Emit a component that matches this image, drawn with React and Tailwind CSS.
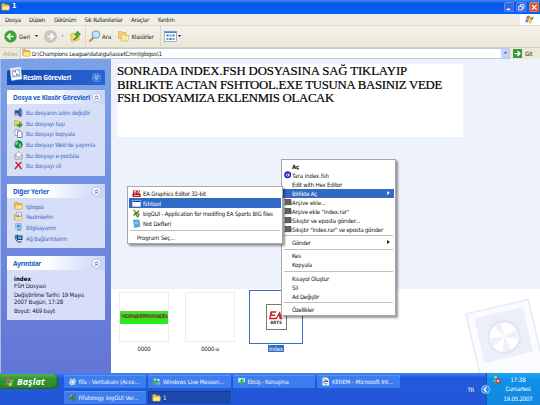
import React, { useLayoutEffect, useRef, useState } from "react";

// Text that is tracked so that it spans a given width.
function Fit({ w, className = "", children }) {
  const ref = useRef(null);
  const [ls, setLs] = useState(0);
  useLayoutEffect(() => {
    const natural = ref.current.getBoundingClientRect().width;
    setLs((w - natural) / ref.current.textContent.length);
  }, []);
  return (
    <span ref={ref} className={"inline-block shrink-0 whitespace-pre " + className} style={{ letterSpacing: ls + "px" }}>
      {children}
    </span>
  );
}

function Folder({ className = "h-[8px] w-[9px]" }) {
  return (
    <svg viewBox="0 0 18 16" className={"shrink-0 " + className}>
      <path d="M1 3l1-2h5l2 2h6l1 2v9H2L1 12z" fill="#e9b93c" stroke="#b98a26" />
      <path d="M3 6h14l-1 8H2z" fill="#ffe994" stroke="#d9ab3d" />
    </svg>
  );
}

function Chevrons({ dark }) {
  return (
    <svg viewBox="0 0 20 20" className="h-[9px] w-[9px] shrink-0">
      <circle cx="10" cy="10" r="9" fill={dark ? "#3d72d8" : "#fff"} stroke={dark ? "#86aaf0" : "#a9b4d4"} strokeWidth="1.5" />
      <path d={dark ? "M6 5l4 4 4-4M6 10l4 4 4-4" : "M6 10l4-4 4 4M6 15l4-4 4 4"} fill="none" stroke={dark ? "#fff" : "#39467c"} strokeWidth="2" />
    </svg>
  );
}

const svg9 = "h-[9px] w-[9px] shrink-0";
const icons = {
  rename: <svg viewBox="0 0 18 18" className={svg9}><path d="M1 4h16v11H1z" fill="#7a91cd" /><path d="M2 5h8v9H2z" fill="#334d98" /><path d="M12 2v14M10 2h5M10 16h5" stroke="#233973" strokeWidth="2" /><path d="M3 12h5" stroke="#fff" strokeWidth="2" /></svg>,
  move: <svg viewBox="0 0 18 18" className={svg9}><path d="M1 3h6l2 2h6v9H1z" fill="#ead35d" stroke="#a79b3a" /><path d="M6 11h5V7l6 5-6 5v-3H6z" fill="#34a832" stroke="#177e22" /></svg>,
  copy: <svg viewBox="0 0 18 18" className={svg9}><path d="M2 1h8v12H2z" fill="#fff" stroke="#626f91" /><path d="M7 4h6l3 3v10H7z" fill="#fff" stroke="#526287" strokeWidth="1.5" /></svg>,
  web: <svg viewBox="0 0 18 18" className={svg9}><circle cx="9" cy="9" r="8" fill="#168f46" /><path d="M4 3l5 1-1 4-4 2-2-3zM10 8l5-1-1 6-4 3z" fill="#77d85d" /><path d="M8 1c4 2 7 5 8 9" stroke="#1b609f" strokeWidth="2" fill="none" /></svg>,
  mail: <svg viewBox="0 0 18 18" className={svg9}><path d="M2 7l7-6 7 6v9H2z" fill="#efdc95" stroke="#947f54" /><path d="M5 3h9v8H5z" fill="#fff" stroke="#adadb8" /><path d="M2 8l7 5 7-5v8H2z" fill="#dce3f5" stroke="#7e83a0" /></svg>,
  del: <svg viewBox="0 0 18 18" className={svg9}><path d="M3 2c4 3 8 8 12 14M15 2C10 6 6 10 2 16" stroke="#cb1920" strokeWidth="2.8" fill="none" /></svg>,
  folder: <Folder />,
  pics: <svg viewBox="0 0 18 18" className={svg9}><path d="M1 5h15v11H1z" fill="#edc45c" stroke="#ae8531" /><path d="M5 1h10v10H5z" fill="#e5e8f6" stroke="#8a8ca2" /><path d="M6 8l3-3 5 5H6z" fill="#7794c4" /><path d="M2 10h14v6H2z" fill="#f8db80" /></svg>,
  pc: <svg viewBox="0 0 18 18" className={svg9}><path d="M3 1h12v10H3z" fill="#d6e4f5" stroke="#718bac" /><path d="M5 3h8v6H5z" fill="#3b97de" /><path d="M7 11h6l2 5H5z" fill="#8caac6" /></svg>,
  net: <svg viewBox="0 0 18 18" className={svg9}><circle cx="6" cy="6" r="5" fill="#2a9a8d" /><path d="M6 3h11v9H6z" fill="#1b3e83" /><path d="M8 5h7v5H8z" fill="#57b3ee" /><path d="M3 11l5 5h7" stroke="#26436e" strokeWidth="2" fill="none" /></svg>,
  ea: <svg viewBox="0 0 18 18" className={svg9}><path d="M2 3h14v8H2z" fill="#d51927" /><path d="M1 9h16v7H1z" fill="#a41b28" /><path d="M4 5h4M4 8h4M11 9l2-5 2 5" stroke="#fff" strokeWidth="1.5" fill="none" /><path d="M4 13h10" stroke="#eec7c7" strokeWidth="2" /></svg>,
  exe: <svg viewBox="0 0 18 18" className={svg9}><path d="M1 3h16v12H1z" fill="#fff" /><path d="M1 3h16v3H1z" fill="#12379a" /><path d="M1 3h16v12H1z" fill="none" stroke="#c6d5f1" /></svg>,
  big: <svg viewBox="0 0 18 18" className={svg9}><path d="M3 2l5 5-3 4M14 3l-4 5 4 3-3 6M3 13l5-3 2 5" stroke="#4e7c21" strokeWidth="2.6" fill="none" /><circle cx="6" cy="5" r="2" fill="#b6b73a" /></svg>,
  note: <svg viewBox="0 0 18 18" className={svg9}><path d="M3 2h11l2 13-11 2z" fill="#51b0df" stroke="#347fae" /><path d="M5 6h8M5 9h8" stroke="#bceafa" /></svg>,
  rar: <svg viewBox="0 0 18 18" className="h-[8px] w-[8px] shrink-0"><path d="M1 2h14l2 3H3z" fill="#8b476c" /><path d="M1 3h15v4H1z" fill="#a23349" /><path d="M2 7h15v4H2z" fill="#354c8d" /><path d="M1 11h16v5H1z" fill="#317045" /><path d="M9 2v14" stroke="#7d6a4a" strokeWidth="3" /><path d="M3 5h3M3 13h3" stroke="#e6cfd4" /></svg>,
  tara: <svg viewBox="0 0 18 18" className="h-[7.500px] w-[7.500px] shrink-0"><circle cx="9" cy="9" r="8.500" fill="#1b27c5" /><circle cx="8.500" cy="9.500" r="3" fill="none" stroke="#fff" strokeWidth="1.800" /><path d="M12 6v7" stroke="#fff" strokeWidth="1.800" /></svg>,
  doc: <svg viewBox="0 0 18 18" className={svg9}><path d="M2 12l3-9 5 2 2-3 4 5-2 8-8 2z" fill="#c9d4ef" /><path d="M7 7l6 1-2 6-5-1z" fill="#fff" stroke="#7b8bb5" /></svg>,
  msn: <svg viewBox="0 0 18 18" className={svg9}><circle cx="6" cy="5" r="3" fill="#8ce06c" /><path d="M1 15l2-6h6l2 6z" fill="#49b05e" /><circle cx="13" cy="6" r="2.6" fill="#b9eaff" /><path d="M9 15l2-5h4l2 5z" fill="#67b7ed" /></svg>,
  chat: <svg viewBox="0 0 18 18" className={svg9}><path d="M2 2h14v8l-5 1-4 5V11H3z" fill="#c6f4d0" /><path d="M7 5l7-1-3 10-5 2z" fill="#37b35a" /></svg>,
  ie: <svg viewBox="0 0 18 18" className={svg9}><path d="M3 1h9l4 4v12H3z" fill="#fff8df" /><path d="M13 12c-3 4-8 1-7-3s7-4 8 0H7" stroke="#2467c3" strokeWidth="2" fill="none" /><path d="M2 4h5" stroke="#d8ac40" strokeWidth="2" /></svg>,
};

function Flag({ className }) {
  return (
    <svg viewBox="0 0 20 18" className={"shrink-0 " + className}>
      <path d="M4 2q3-2 6 0l-2 6q-3-2-6 0z" fill="#ee5b2f" />
      <path d="M11 3q3 2 7 0l-2 6q-4 2-7 0z" fill="#74bc3d" />
      <path d="M2 9q3-2 6 0l-2 6q-3-2-6 0z" fill="#4c8ee8" />
      <path d="M9 10q3 2 6 0l-2 6q-3 2-6 0z" fill="#fbc635" />
    </svg>
  );
}

function Panel({ title, w, className, children }) {
  return (
    <section className={"w-[98px] bg-[#d6dff7] " + className}>
      <h2 className="flex h-[14px] items-center justify-between rounded-t-[2px] bg-linear-to-r from-white from-40% to-[#c7d4f7] pr-[4px] pl-[6px] font-['Noto_Sans'] text-[6.5px] font-bold text-[#215dc6]">
        <Fit w={w}>{title}</Fit>
        <Chevrons />
      </h2>
      {children}
    </section>
  );
}

function Links({ items }) {
  return items.map(([icon, text, w]) => (
    <div key={text} className="flex h-[10.6px] items-center gap-[3px] pl-[7px] text-[#3d69c5]">
      {icons[icon]}
      <Fit w={w}>{text}</Fit>
    </div>
  ));
}

function MenuRow({ icon, text, w, active, arrow, className = "h-[9px]", pad = "pl-[9px]" }) {
  return (
    <div className={"flex items-center " + className + (active ? " bg-[#316ac5] text-white" : "")}>
      <span className={"flex shrink-0 " + (pad === "pl-[9px]" ? "w-[9px] justify-start pl-[0.5px]" : "w-[14px] justify-end pr-[2px]")}>{icon && icons[icon]}</span>
      <Fit w={w}>{text}</Fit>
      {arrow && (
        <svg viewBox="0 0 4 6" className="mr-[4px] ml-auto h-[4px] w-[3px]"><path d="M0 0l4 3-4 3z" fill={active ? "#fff" : "#000"} /></svg>
      )}
    </div>
  );
}

const Sep = () => <div className="flex h-[4.4px] items-center px-[1px]"><div className="h-px w-full bg-[#c2bfb4]" /></div>;

function Task({ icon, text, w, active }) {
  return (
    <div className={"flex h-[13px] w-[82.5px] items-center gap-[2px] rounded-[1.5px] pl-[4px] text-[#f2f6ff] " + (active ? "bg-[#1b49ad] shadow-[inset_1px_1px_1px_#153b90]" : "bg-[#3c7df0] shadow-[inset_0_1px_0_#5c96f8]")}>
      {icons[icon]}
      <Fit w={w}>{text}</Fit>
    </div>
  );
}

const Caret = ({ c = "#222" }) => <svg viewBox="0 0 6 4" className="h-[2px] w-[3px] shrink-0"><path d="M0 0h6l-3 4z" fill={c} /></svg>;

export default function App() {
  return (
    <div className="relative flex h-[405px] w-[540px] flex-col overflow-hidden bg-white font-['DejaVu_Sans_Condensed','DejaVu_Sans','Noto_Sans',sans-serif] text-[6px] leading-[7px] text-[#222]">
      <header className="flex h-[13.5px] shrink-0 items-center bg-linear-to-b from-[#3f8cf3] via-[#0755e5] via-25% to-[#0262fb] pr-[1px] pl-[1px] text-white">
        <Folder />
        <span className="ml-[2px] text-[7px] font-bold">1</span>
        <div className="ml-auto flex gap-[2px]">
          <svg viewBox="0 0 20 20" className="h-[10.5px] w-[10.5px]"><rect x="1" y="1" width="18" height="18" rx="3" fill="#3565e2" stroke="#9bbcfb" /><path d="M5 14h7" stroke="#fff" strokeWidth="3" /></svg>
          <svg viewBox="0 0 20 20" className="h-[10.5px] w-[10.5px]"><rect x="1" y="1" width="18" height="18" rx="3" fill="#3565e2" stroke="#9bbcfb" /><path d="M8 8V5h7v7h-3M5 8.500h7V15H5z" stroke="#fff" strokeWidth="1.7" fill="none" /></svg>
          <svg viewBox="0 0 20 20" className="h-[10.5px] w-[10.5px]"><rect x="1" y="1" width="18" height="18" rx="3" fill="#e3532d" stroke="#f6c3b4" /><path d="M5.500 5.500l9 9M14.500 5.500l-9 9" stroke="#fff" strokeWidth="2.5" /></svg>
        </div>
      </header>

      <nav className="flex h-[12px] shrink-0 items-center border-b border-[#dedbcd] bg-[#efeee4] pl-[5px]">
        <Fit w={16} className="mr-[8px]">Dosya</Fit>
        <Fit w={16} className="mr-[9px]">Düzen</Fit>
        <Fit w={22} className="mr-[8.500px]">Görünüm</Fit>
        <Fit w={38} className="mr-[8.500px]">Sık Kullanılanlar</Fit>
        <Fit w={18} className="mr-[8.500px]">Araçlar</Fit>
        <Fit w={17}>Yardım</Fit>
        <div className="ml-auto flex h-full w-[20px] items-center justify-center bg-white"><Flag className="h-[9px] w-[10px]" /></div>
      </nav>

      <div className="flex h-[22px] shrink-0 items-center border-b border-[#d5d1c0] bg-linear-to-b from-[#f3f1e9] to-[#ebe8d8] pl-[4px]">
        <svg viewBox="0 0 26 26" className="h-[13px] w-[13px] shrink-0"><circle cx="13" cy="13" r="12" fill="#35a536" stroke="#75b36d" /><path d="M19 13H8M13 7l-6 6 6 6" stroke="#fff" strokeWidth="3" fill="none" /></svg>
        <Fit w={11} className="ml-[2px]">Geri</Fit>
        <span className="ml-[5px] flex"><Caret /></span>
        <svg viewBox="0 0 26 26" className="ml-[6px] h-[13px] w-[13px] shrink-0"><circle cx="13" cy="13" r="12" fill="#c9c9c4" stroke="#adaea8" /><path d="M7 13h11M13 7l6 6-6 6" stroke="#fff" strokeWidth="3" fill="none" /></svg>
        <span className="ml-[4px] flex"><Caret c="#b5b4ab" /></span>
        <svg viewBox="0 0 22 24" className="ml-[6px] h-[12px] w-[11px] shrink-0"><path d="M1 8l7-2 2 2 9-2-1 14-15 3z" fill="#f5dc74" stroke="#bd9833" /><path d="M7 18c5-1 6-5 6-8H9l6-8 6 7h-4c0 6-4 10-10 11z" fill="#42a83a" stroke="#26802a" /></svg>
        <div className="ml-[4px] h-[20px] w-px bg-[#d9d6c8]" />
        <svg viewBox="0 0 26 26" className="ml-[2px] h-[13px] w-[13px] shrink-0"><path d="M3 23l8-8" stroke="#b58b5b" strokeWidth="4" /><circle cx="16" cy="9" r="7.500" fill="#c8e6fb" stroke="#7795b8" strokeWidth="2" /></svg>
        <Fit w={9.5} className="ml-[1px]">Ara</Fit>
        <svg viewBox="0 0 24 24" className="ml-[6px] h-[12px] w-[12px] shrink-0"><path d="M1 3h6l2 2h7v12H1z" fill="#f3d472" stroke="#c49a40" /><path d="M6 9h6l2 2h8l-2 11H7z" fill="#ffe99b" stroke="#c9a148" /></svg>
        <Fit w={22} className="ml-[2px]">Klasörler</Fit>
        <div className="ml-[6px] h-[20px] w-px bg-[#d9d6c8]" />
        <svg viewBox="0 0 26 22" className="ml-[3px] h-[11px] w-[13px] shrink-0"><rect x="1" y="1" width="24" height="20" fill="#fff" stroke="#3b6fc4" /><path d="M1 1h24v3H1z" fill="#4c8ae2" /><path d="M5 7h4v4H5zM17 7h4v4h-4zM11 14h4v4h-4z" fill="#3a6ecb" /><path d="M11 7h4v4h-4zM5 14h4v4H5zM17 14h4v4h-4z" fill="#65a28f" /></svg>
        <span className="ml-[1px] flex"><Caret /></span>
      </div>

      <div className="flex h-[11.5px] shrink-0 items-center bg-[#ece9d8] pl-[3px]">
        <Fit w={15} className="mr-[2px] text-[#aaa799]">Adres</Fit>
        <div className="flex h-[11px] w-[490px] items-center border border-[#bdcbe0] bg-white pl-[1px]">
          <Folder />
          <Fit w={130} className="ml-[1px] text-[#111]">{"D:\\Champions League\\data\\gui\\assetCmn\\lglogos\\1"}</Fit>
          <span className="ml-auto flex h-[9px] w-[8px] items-center justify-center bg-[#c3d3fb]"><Caret c="#34568e" /></span>
        </div>
        <svg viewBox="0 0 18 18" className="ml-[3px] h-[9px] w-[9px] shrink-0"><rect width="18" height="18" rx="1" fill="#32993b" /><path d="M3 9h10M9 4l5 5-5 5" stroke="#fff" strokeWidth="2.500" fill="none" /></svg>
        <Fit w={7} className="ml-[3px]">Git</Fit>
      </div>

      <div className="flex h-[314px] shrink-0">
        <aside className="flex w-[111px] shrink-0 flex-col border-l border-[#a9bbea] bg-linear-to-b from-[#7ba2e7] to-[#6375d6] pt-[11px] pl-[6px]">
          <section className="flex h-[15px] w-[98px] shrink-0 items-center rounded-t-[2px] bg-linear-to-r from-[#1148ad] to-[#2a63d3] pr-[4px] pl-[2px] font-['Noto_Sans'] text-[6.500px] font-bold text-white">
            <svg viewBox="0 0 28 32" className="-mt-[7px] h-[16px] w-[14px] shrink-0"><path d="M2 5l21-3 3 24-21 3z" fill="#fff" stroke="#c4d1ec" /><path d="M5 8l16-3 2 16-16 2z" fill="#79b4ef" /><circle cx="14" cy="14" r="6" fill="#fff" /><path d="M14 14l-5-3 5-3zM14 14l5 3-5 3z" fill="#dd6d59" /></svg>
            <Fit w={48} className="-mt-[1px]">Resim Görevleri</Fit>
            <span className="-mt-[1px] ml-auto"><Chevrons dark /></span>
          </section>
          <Panel title="Dosya ve Klasör Görevleri" w={77} className="mt-[5px] h-[86px] shrink-0">
            <div className="pt-[3.500px]">
              <Links items={[["rename", "Bu dosyanın adını değiştir", 64], ["move", "Bu dosyayı taşı", 39], ["copy", "Bu dosyayı kopyala", 49], ["web", "Bu dosyayı Web'de yayımla", 69], ["mail", "Bu dosyayı e-postala", 53], ["del", "Bu dosyayı sil", 35]]} />
            </div>
          </Panel>
          <Panel title="Diğer Yerler" w={36} className="mt-[8px] h-[64px] shrink-0">
            <div className="pt-[3px]">
              <Links items={[["folder", "lglogos", 18], ["pics", "Resimlerim", 27], ["pc", "Bilgisayarım", 30], ["net", "Ağ Bağlantılarım", 41]]} />
            </div>
          </Panel>
          <Panel title="Ayrıntılar" w={28} className="mt-[8px] h-[64px] shrink-0">
            <div className="flex flex-col items-start pt-[4.500px] pl-[7px] text-[#16203c]">
              <Fit w={17} className="font-bold text-black">index</Fit>
              <Fit w={32}>FSH Dosyası</Fit>
              <Fit w={70} className="mt-[2.500px]">Değiştirilme Tarihi: 19 Mayıs</Fit>
              <Fit w={49}>2007 Bugün, 17:28</Fit>
              <Fit w={41} className="mt-[2px]">Boyut: 469 bayt</Fit>
            </div>
          </Panel>
        </aside>

        <main className="flex grow flex-col">
          <div className="h-[230px] bg-[#edf2fc] pt-[5px] pl-[6px]">
            <div className="flex h-[73px] w-[346px] flex-col items-start bg-white pt-px font-['Liberation_Serif',serif] text-[12.800px] leading-[13.700px] text-black [-webkit-text-stroke:0.2px_#000]">
              <Fit w={290}>SONRADA INDEX.FSH DOSYASINA SAĞ TIKLAYIP</Fit>
              <Fit w={325}>BIRLIKTE ACTAN FSHTOOL.EXE TUSUNA BASINIZ VEDE</Fit>
              <Fit w={217}>FSH DOSYAMIZA EKLENMIS OLACAK</Fit>
            </div>
          </div>
          <div className="relative flex grow items-start overflow-hidden bg-white pl-[8px]">
            <svg viewBox="0 0 80 80" className="absolute top-[4px] left-[349px] h-[80px] w-[80px]">
              <g transform="translate(6 21) rotate(-13)">
                <rect x="0" y="0" width="64" height="90" fill="#fbfcff" stroke="#e5e9f8" strokeWidth="1.500" />
                <rect x="7" y="6" width="50" height="46" fill="#eceffa" />
                <circle cx="32" cy="31" r="16" fill="#eef0fb" stroke="#dfe2ef" strokeWidth="1.500" />
                <path d="M32 31l-14-2a14 14 0 0 1 7-11zM32 31V17a14 14 0 0 1 13 9zM32 31l13 5a14 14 0 0 1-9 9zM32 31l-5 14a14 14 0 0 1-8-7z" fill="#fff" />
              </g>
            </svg>
            <figure className="mt-[3px] flex w-[50px] flex-col items-center">
              <div className="flex h-[50px] w-[50px] flex-col justify-center border border-[#ececf0]">
                <div className="flex h-[13px] w-[48px] items-center justify-center bg-linear-to-b from-[#4ee03a] via-[#3fd52b] to-[#12f80c] pb-[2px] font-['Liberation_Sans'] text-[5.500px] font-bold text-[#5f4a10]">
                  <Fit w={45}>%GA%&amp;%PR%% %&amp;GI%</Fit>
                </div>
              </div>
              <Fit w={13} className="mt-[2.500px]">0000</Fit>
            </figure>
            <figure className="mt-[3px] ml-[16px] flex w-[50px] flex-col items-center">
              <div className="h-[50px] w-[50px] border border-[#ececf0]" />
              <Fit w={18} className="mt-[2.500px]">0000-a</Fit>
            </figure>
            <figure className="mt-px ml-[14px] flex w-[54px] flex-col items-center">
              <div className="flex h-[54px] w-[54px] items-center justify-center border-[1.500px] border-[#3b6bc4]">
                <div className="flex h-[26px] w-[21px] flex-col items-center justify-center border border-[#777] bg-white">
                  <svg viewBox="0 0 26 18" className="h-[10px] w-[14px]"><path d="M3 2h11l-1 3H6l-1 3h7l-1 3H4l-1 3h10l7-12 5 15h-5l-2-7-4 7H0z" fill="#c91f2a" /></svg>
                  <span className="text-[4.500px] leading-[5px] font-bold text-[#333]">ARTS</span>
                </div>
              </div>
              <span className="mt-[0.500px] flex h-[7px] items-center bg-[#316ac5] px-[1px] text-white"><Fit w={14}>index</Fit></span>
            </figure>
          </div>
        </main>
      </div>

      <footer className="flex h-[32px] shrink-0 bg-linear-to-b from-[#4188ee] via-[#2259dc] via-15% to-[#2157d6]">
        <div className="mt-[1px] flex h-[15px] w-[58px] items-center rounded-r-[5px] bg-linear-to-b from-[#5ab356] via-[#36952f] via-30% to-[#2f8529] pl-[5px] font-['Open_Sans'] text-[9px] font-bold text-white italic shadow-[inset_-1px_-1px_2px_#1b6120]">
          <Flag className="h-[10px] w-[10px]" />
          <Fit w={28} className="ml-[2px] leading-[12px]">Başlat</Fit>
        </div>
        <div className="mt-[2px] ml-[5.500px] grid h-[29px] grid-cols-[82.5px_82.5px_82.5px_82.5px] content-start gap-x-[2px] gap-y-[3px]">
          <Task icon="doc" text="fifa : Veritabanı (Acce..." w={61} />
          <Task icon="msn" text="Windows Live Messen..." w={61} />
          <Task icon="chat" text="EbUş - Konuşma" w={41} />
          <Task icon="ie" text="KEREM - Microsoft Int..." w={61} />
          <Task icon="big" text="Fifatology bigGUI Ver..." w={60} />
          <Task icon="folder" text="1" w={3} active />
        </div>
        <div className="ml-auto flex items-center text-white">
          <Fit w={6.5} className="mr-[7px]">TR</Fit>
          <svg viewBox="0 0 18 18" className="relative z-10 -mr-[4px] h-[9px] w-[9px]"><circle cx="9" cy="9" r="8" fill="#3685e5" stroke="#bde2ff" strokeWidth="1.500" /><path d="M11 4L6 9l5 5" stroke="#fff" strokeWidth="2.500" fill="none" /></svg>
          <div className="flex h-full w-[54px] items-start border-l border-[#0e57b8] bg-linear-to-b from-[#1fa7f5] via-[#1290e8] via-20% to-[#1287e0] pt-[2px] pl-[5px]">
            <svg viewBox="0 0 18 18" className="h-[9px] w-[9px]"><circle cx="7" cy="4" r="3" fill="#9bd878" /><path d="M1 14q5-11 11 0z" fill="#7bbb58" /><circle cx="12" cy="12" r="5" fill="#d83d32" /><path d="M10 10l4 4M14 10l-4 4" stroke="#fff" strokeWidth="1.500" /></svg>
            <div className="flex w-[34px] flex-col items-center gap-[2.300px] pt-[1px]">
              <Fit w={15}>17:38</Fit>
              <Fit w={25}>Cumartesi</Fit>
              <Fit w={29}>19.05.2007</Fit>
            </div>
          </div>
        </div>
      </footer>

      <div className="absolute top-[159px] left-[281px] w-[115px] border border-[#aaa79c] bg-white px-px pt-[1.500px] pb-[1px] text-[#111] shadow-[2px_2px_2px_#0006]">
        <MenuRow text="Aç" w={7} className="h-[9px] font-bold" />
        <MenuRow icon="tara" text="Tara index.fsh" w={37} />
        <MenuRow text="Edit with Hex Editor" w={50} />
        <MenuRow text="Birlikte Aç" w={25} active arrow />
        <MenuRow icon="rar" text="Arşive ekle..." w={34} />
        <MenuRow icon="rar" text={'Arşive ekle "index.rar"'} w={57} />
        <MenuRow icon="rar" text="Sıkıştır ve eposta gönder..." w={68} />
        <MenuRow icon="rar" text={'Sıkıştır "index.rar" ve eposta gönder'} w={91} />
        <Sep />
        <MenuRow text="Gönder" w={18.5} arrow />
        <Sep />
        <MenuRow text="Kes" w={9} />
        <MenuRow text="Kopyala" w={20} />
        <Sep />
        <MenuRow text="Kısayol Oluştur" w={37} />
        <MenuRow text="Sil" w={6} />
        <MenuRow text="Ad Değiştir" w={27} />
        <Sep />
        <MenuRow text="Özellikler" w={22} />
      </div>

      <div className="absolute top-[186px] left-[127px] w-[156px] border border-[#aaa79c] bg-white px-px pt-[1px] pb-[1px] text-[#111] shadow-[2px_2px_2px_#0006]">
        <MenuRow icon="ea" text="EA Graphics Editor 32-bit" w={63} className="h-[10px]" pad="wide" />
        <MenuRow icon="exe" text="fshtool" w={18} active className="h-[10px]" pad="wide" />
        <MenuRow icon="big" text="bigGUI - Application for modifing EA Sports BIG files" w={130} className="h-[10px]" pad="wide" />
        <MenuRow icon="note" text="Not Defteri" w={28} className="h-[10px]" pad="wide" />
        <Sep />
        <div className="flex h-[10px] items-center pl-[8px]"><Fit w={38}>Program Seç...</Fit></div>
      </div>
    </div>
  );
}
